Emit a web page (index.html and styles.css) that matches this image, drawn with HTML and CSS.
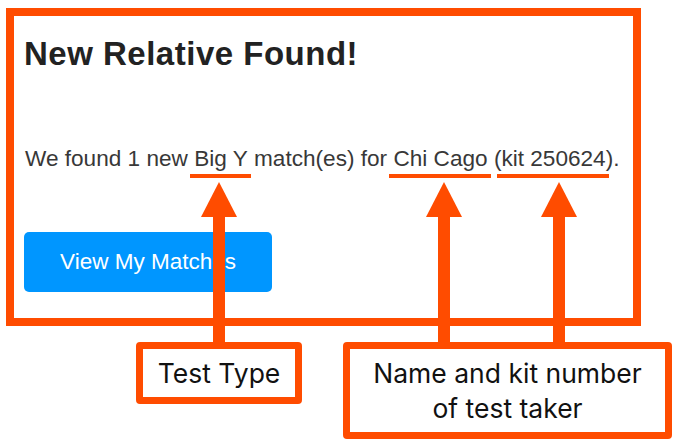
FILE: index.html
```html
<!DOCTYPE html>
<html lang="en">
<head>
<meta charset="utf-8">
<title>New Relative Found</title>
<link rel="stylesheet" href="styles.css">
</head>
<body>
<div class="page">
  <div class="frame">
    <h1 class="title">New Relative Found!</h1>
    <p class="message">We found 1 new <span class="mark">Big Y</span> match(es) for <span class="mark">Chi Cago</span> (<span class="mark">kit 250624</span>).</p>
    <a class="button" href="#">View My Matches</a>
  </div>
  <div class="labels">
    <div class="label label-type">Test Type</div>
    <div class="label label-name">Name and kit number<br>of test taker</div>
  </div>
  <svg class="arrows" width="678" height="448" viewBox="0 0 678 448" aria-hidden="true">
    <polygon points="219,182 201,217 237,217"/>
    <rect x="213" y="216" width="12" height="127"/>
    <polygon points="444,182 426,217 462,217"/>
    <rect x="438" y="216" width="12" height="127"/>
    <polygon points="559,182 541,217 577,217"/>
    <rect x="553" y="216" width="12" height="127"/>
  </svg>
</div>
</body>
</html>
```

FILE: styles.css
```css
* { box-sizing: border-box; }

html, body {
  margin: 0;
  padding: 0;
  background: #ffffff;
}

.page {
  position: relative;
  width: 678px;
  height: 448px;
  padding: 8px 0 0 6px;
  overflow: hidden;
}

.frame {
  width: 635px;
  height: 318px;
  border: 8px solid #ff4c00;
  padding: 19px 10px 0 10px;
  display: flex;
  flex-direction: column;
  align-items: flex-start;
}

.title {
  margin: 0;
  font-family: "Liberation Sans", Arial, sans-serif;
  font-weight: 700;
  font-size: 33px;
  line-height: 38px;
  color: #222222;
  letter-spacing: 0.5px;
}

.message {
  margin: 73px 0 0 1px;
  font-family: "Liberation Sans", Arial, sans-serif;
  font-size: 22.6px;
  line-height: 26px;
  color: #383838;
  white-space: nowrap;
}

.mark {
  position: relative;
}

.mark::after {
  content: "";
  position: absolute;
  left: -4px;
  right: -3px;
  bottom: -7px;
  height: 4px;
  background: #ff4c00;
}

.button {
  margin-top: 60px;
  width: 248px;
  height: 60px;
  border-radius: 5px;
  background: #0096ff;
  color: #ffffff;
  text-decoration: none;
  font-family: "Liberation Sans", Arial, sans-serif;
  font-size: 22.5px;
  display: flex;
  align-items: center;
  justify-content: center;
}

.labels {
  display: flex;
  align-items: flex-start;
  margin-top: 16px;
}

.label {
  border: 7px solid #ff4c00;
  border-radius: 4px;
  display: flex;
  align-items: center;
  justify-content: center;
  text-align: center;
  font-family: "Inter", "Open Sans", sans-serif;
  font-size: 26.5px;
  line-height: 35px;
  color: #111111;
}

.label-type {
  margin-left: 130px;
  width: 166px;
  height: 62px;
}

.label-name {
  margin-left: 41px;
  width: 329px;
  height: 97px;
}

.arrows {
  position: absolute;
  top: 0;
  left: 0;
  pointer-events: none;
  fill: #ff4c00;
}
```
